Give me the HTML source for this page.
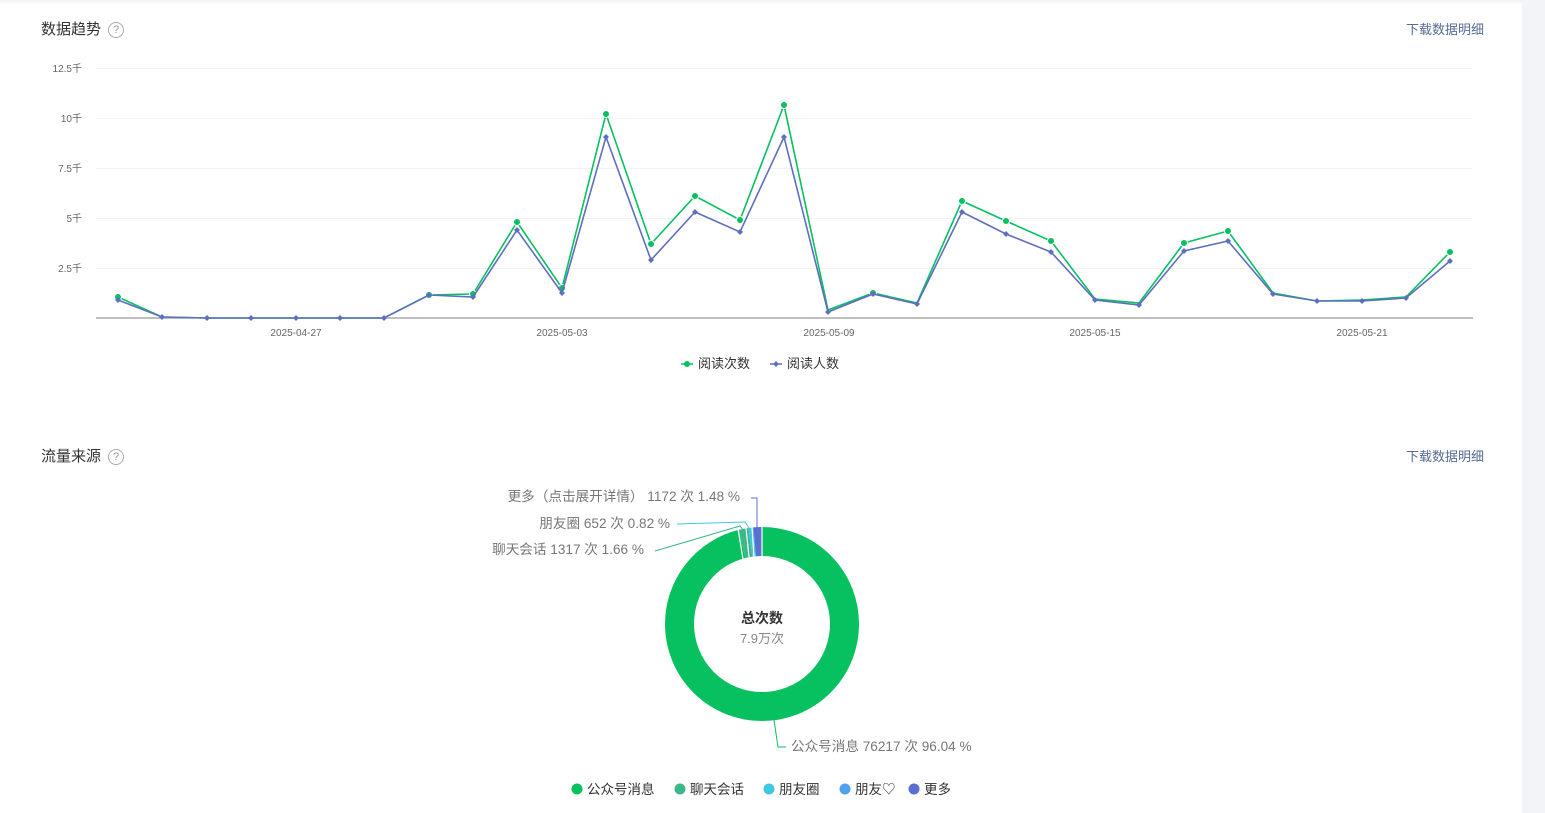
<!DOCTYPE html>
<html><head><meta charset="utf-8"><style>
html,body{margin:0;padding:0;width:1545px;height:813px;overflow:hidden;background:#fff;font-family:"Liberation Sans","Noto Sans CJK SC",sans-serif;}
.strip{position:absolute;left:1522px;top:0;width:23px;height:813px;background:#f3f4f7;}
.topband{position:absolute;left:0;top:0;width:1522px;height:5px;background:linear-gradient(#f2f2f2,#fff);}
.t{position:absolute;font-size:15px;color:#333;}
.q{display:inline-block;width:14px;height:14px;border:1px solid #aaa;border-radius:50%;font-size:11px;line-height:14px;text-align:center;color:#999;margin-left:7px;vertical-align:1px;}
.dl{position:absolute;font-size:13px;color:#576b95;}
</style></head><body>
<div class="topband"></div>
<div class="strip"></div>
<div class="t" style="left:41px;top:18px;">数据趋势<span class="q">?</span></div>
<div class="dl" style="left:1406px;top:19px;">下载数据明细</div>
<div class="t" style="left:41px;top:445px;">流量来源<span class="q">?</span></div>
<div class="dl" style="left:1406px;top:446px;">下载数据明细</div>
<svg width="1545" height="813" style="position:absolute;left:0;top:0" font-family="Liberation Sans, Noto Sans CJK SC, sans-serif">
<g stroke="#f3f3f3" stroke-width="1">
<line x1="96" y1="68.5" x2="1472" y2="68.5"/><line x1="96" y1="118.5" x2="1472" y2="118.5"/><line x1="96" y1="168.5" x2="1472" y2="168.5"/><line x1="96" y1="218.5" x2="1472" y2="218.5"/><line x1="96" y1="268.5" x2="1472" y2="268.5"/>
</g>
<line x1="96" y1="318" x2="1473" y2="318" stroke="#999" stroke-width="1.2"/>
<g font-size="10" fill="#666" text-anchor="end">
<text x="82" y="72">12.5千</text><text x="82" y="122">10千</text><text x="82" y="172">7.5千</text><text x="82" y="222">5千</text><text x="82" y="272">2.5千</text>
</g>
<g font-size="10" fill="#666" text-anchor="middle">
<text x="296" y="336">2025-04-27</text><text x="562" y="336">2025-05-03</text><text x="829" y="336">2025-05-09</text><text x="1095" y="336">2025-05-15</text><text x="1362" y="336">2025-05-21</text>
</g>
<polyline fill="none" stroke="#07c160" stroke-width="1.6" points="118,297 162,317 207,318 251,318 296,318 340,318 384,318 429,295 473,294 517,222 562,288 606,114 651,244 695,196 740,220 784,105 828,310 873,293 917,303 962,201 1006,221 1051,241 1095,299 1139,303 1184,243 1228,231 1273,293 1317,301 1362,300 1406,297 1450,252"/>
<g fill="#07c160" stroke="#fff" stroke-width="1">
<circle cx="118" cy="297" r="3.5"/><circle cx="429" cy="295" r="3.5"/><circle cx="473" cy="294" r="3.5"/><circle cx="517" cy="222" r="3.5"/><circle cx="562" cy="288" r="3.5"/><circle cx="606" cy="114" r="3.5"/><circle cx="651" cy="244" r="3.5"/><circle cx="695" cy="196" r="3.5"/><circle cx="740" cy="220" r="3.5"/><circle cx="784" cy="105" r="3.5"/><circle cx="873" cy="293" r="3.5"/><circle cx="962" cy="201" r="3.5"/><circle cx="1006" cy="221" r="3.5"/><circle cx="1051" cy="241" r="3.5"/><circle cx="1184" cy="243" r="3.5"/><circle cx="1228" cy="231" r="3.5"/><circle cx="1450" cy="252" r="3.5"/>
</g>
<polyline fill="none" stroke="#5f6fbf" stroke-width="1.6" points="118,300 162,317 207,318 251,318 296,318 340,318 384,318 429,295 473,297 517,230 562,293 606,137 651,260 695,212 740,232 784,137 828,312 873,294 917,304 962,212 1006,234 1051,252 1095,300 1139,305 1184,251 1228,241 1273,294 1317,301 1362,301 1406,298 1450,261"/>
<g fill="#5f6fbf">
<path d="M118 297l3 3-3 3-3-3z"/><path d="M162 314l3 3-3 3-3-3z"/><path d="M207 315l3 3-3 3-3-3z"/><path d="M251 315l3 3-3 3-3-3z"/><path d="M296 315l3 3-3 3-3-3z"/><path d="M340 315l3 3-3 3-3-3z"/><path d="M384 315l3 3-3 3-3-3z"/><path d="M429 292l3 3-3 3-3-3z"/><path d="M473 294l3 3-3 3-3-3z"/><path d="M517 227l3 3-3 3-3-3z"/><path d="M562 290l3 3-3 3-3-3z"/><path d="M606 134l3 3-3 3-3-3z"/><path d="M651 257l3 3-3 3-3-3z"/><path d="M695 209l3 3-3 3-3-3z"/><path d="M740 229l3 3-3 3-3-3z"/><path d="M784 134l3 3-3 3-3-3z"/><path d="M828 309l3 3-3 3-3-3z"/><path d="M873 291l3 3-3 3-3-3z"/><path d="M917 301l3 3-3 3-3-3z"/><path d="M962 209l3 3-3 3-3-3z"/><path d="M1006 231l3 3-3 3-3-3z"/><path d="M1051 249l3 3-3 3-3-3z"/><path d="M1095 297l3 3-3 3-3-3z"/><path d="M1139 302l3 3-3 3-3-3z"/><path d="M1184 248l3 3-3 3-3-3z"/><path d="M1228 238l3 3-3 3-3-3z"/><path d="M1273 291l3 3-3 3-3-3z"/><path d="M1317 298l3 3-3 3-3-3z"/><path d="M1362 298l3 3-3 3-3-3z"/><path d="M1406 295l3 3-3 3-3-3z"/><path d="M1450 258l3 3-3 3-3-3z"/>
</g>
<line x1="681" y1="364" x2="693" y2="364" stroke="#07c160" stroke-width="1.5"/><circle cx="687" cy="364" r="3" fill="#07c160"/>
<text x="698" y="368" font-size="13" fill="#333">阅读次数</text>
<line x1="770" y1="364" x2="782" y2="364" stroke="#5f6fbf" stroke-width="1.5"/><path d="M776 361l3 3-3 3-3-3z" fill="#5f6fbf"/>
<text x="787" y="368" font-size="13" fill="#333">阅读人数</text>

<g transform="translate(762,624) rotate(-90)" fill="none" stroke-width="29">
<circle r="82.5" stroke="#07c160" stroke-dasharray="497.9 600"/>
<circle r="82.5" stroke="#3bb88a" stroke-dasharray="0 497.9 8.6 600"/>
<circle r="82.5" stroke="#40c8e0" stroke-dasharray="0 506.5 4.25 600"/>
<circle r="82.5" stroke="#5b6fd0" stroke-dasharray="0 510.75 7.67 600"/>
</g>
<g stroke="#fff" stroke-width="1.2">
<line x1="762" y1="526" x2="762" y2="556"/><line x1="752" y1="527" x2="754" y2="557"/><line x1="746" y1="528" x2="749" y2="557"/><line x1="738" y1="529" x2="743" y2="559"/>
</g>
<text x="762" y="623" font-size="14" font-weight="bold" fill="#333" text-anchor="middle">总次数</text>
<text x="762" y="643" font-size="13" fill="#888" text-anchor="middle">7.9万次</text>
<g fill="none" stroke-width="1">
<polyline points="757,528 757,498 751,498" stroke="#5b6fd0"/>
<polyline points="749,528 745,522 677,524" stroke="#40c8e0"/>
<polyline points="744,531 740,526 655,551" stroke="#3bb88a"/>
<polyline points="774,720 778,747 786,747" stroke="#07c160"/>
</g>
<g font-size="13.6" fill="#777">
<text x="740" y="501" text-anchor="end">更多（点击展开详情） 1172 次 1.48 %</text>
<text x="670" y="528" text-anchor="end">朋友圈 652 次 0.82 %</text>
<text x="644" y="554" text-anchor="end">聊天会话 1317 次 1.66 %</text>
<text x="791" y="751">公众号消息 76217 次 96.04 %</text>
</g>
<g font-size="13.5" fill="#333">
<circle cx="577" cy="789" r="5.5" fill="#07c160"/><text x="587" y="794">公众号消息</text>
<circle cx="680" cy="789" r="5.5" fill="#3bb88a"/><text x="690" y="794">聊天会话</text>
<circle cx="769" cy="789" r="5.5" fill="#40c8e0"/><text x="779" y="794">朋友圈</text>
<circle cx="845" cy="789" r="5.5" fill="#4fa3ee"/><text x="855" y="794">朋友♡</text>
<circle cx="914" cy="789" r="5.5" fill="#5b6fd0"/><text x="924" y="794">更多</text>
</g>
</svg>
</body></html>
